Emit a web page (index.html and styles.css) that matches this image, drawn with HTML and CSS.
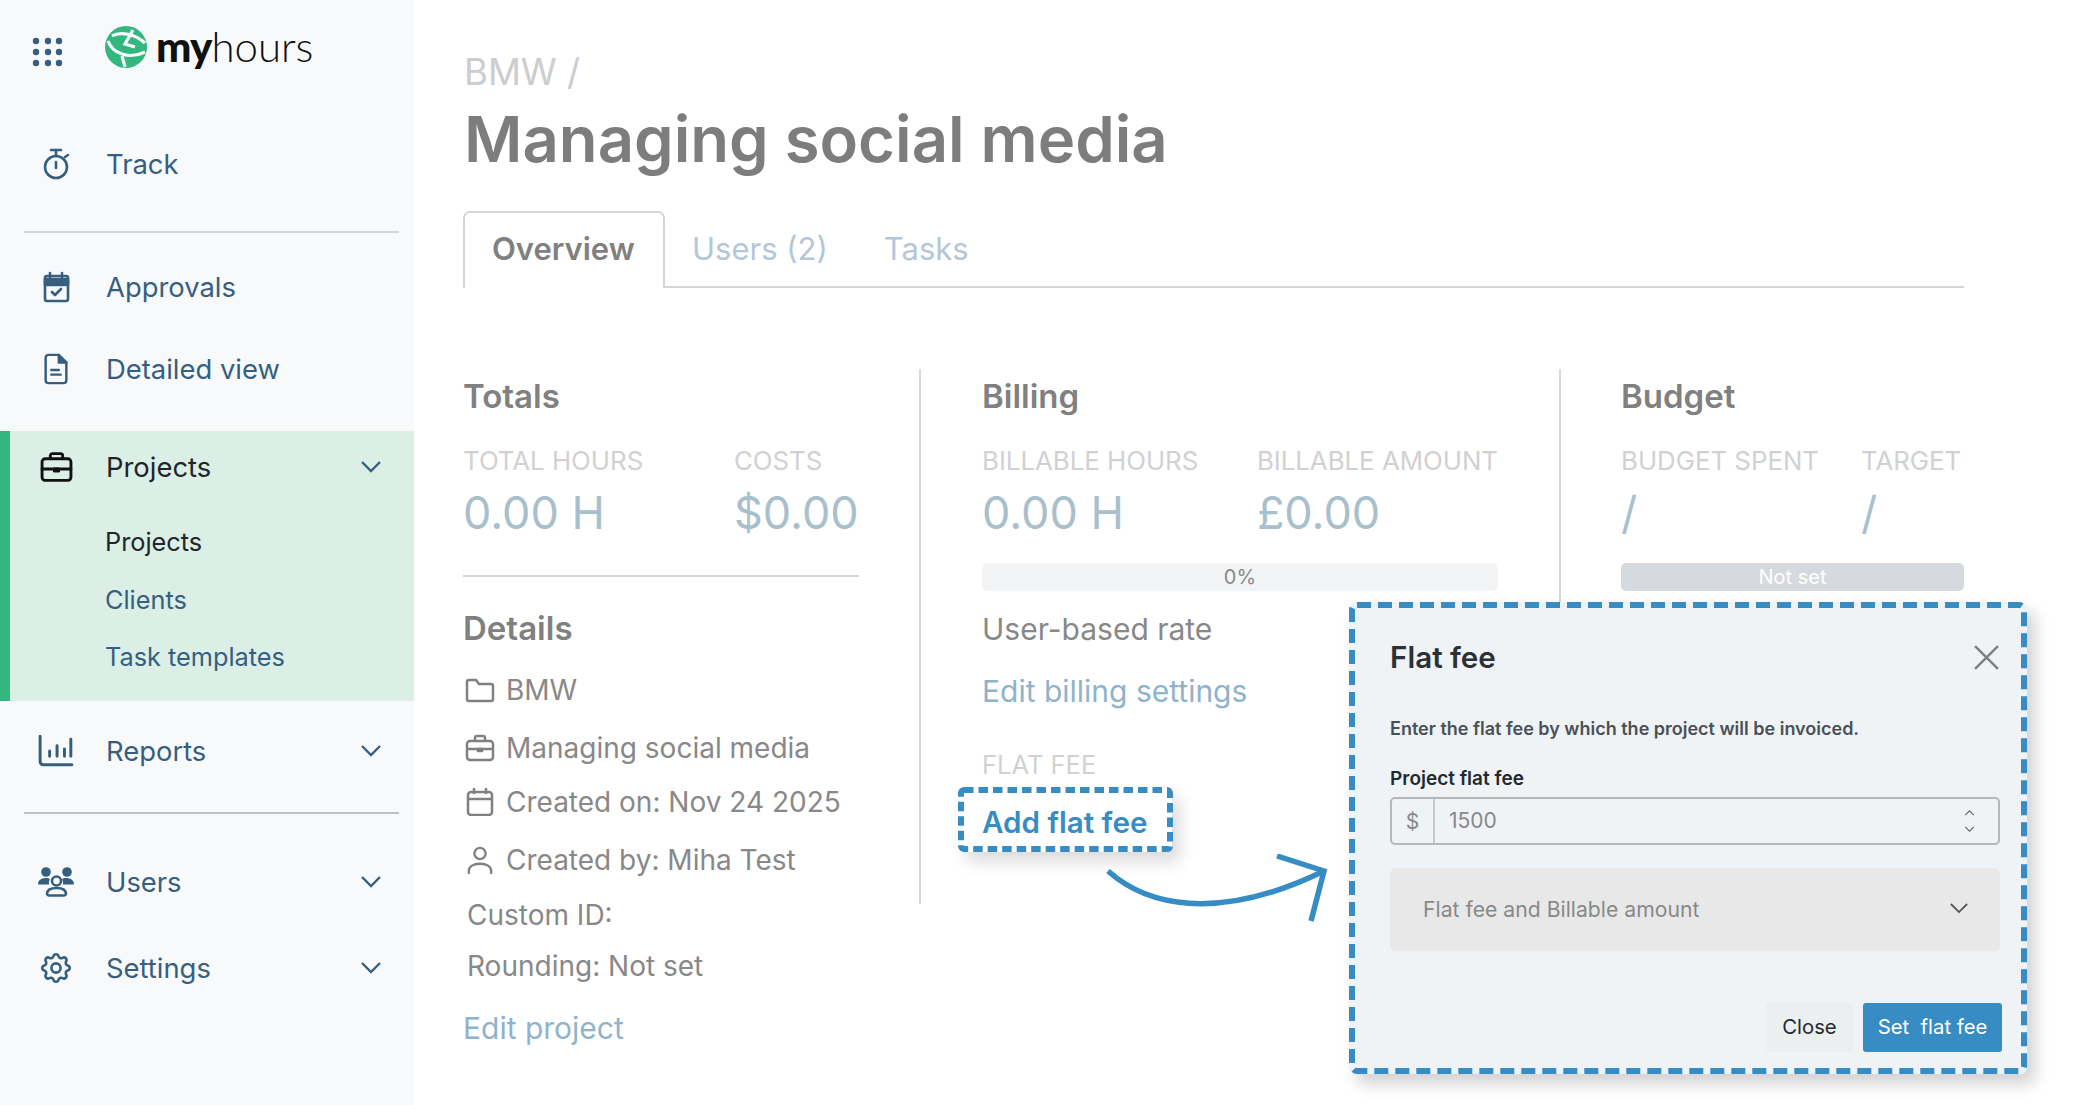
FILE: index.html
```html
<!DOCTYPE html>
<html lang="en">
<head>
<meta charset="utf-8">
<title>My Hours – Managing social media</title>
<link rel="stylesheet" href="styles.css">
</head>
<body>
<div class="app">
  <aside class="sidebar">
    <div class="brand">
      <svg class="apps" viewBox="0 0 32 30" fill="#365f7f"><circle cx="4" cy="4" r="3.2"/><circle cx="16" cy="4" r="3.2"/><circle cx="27" cy="4" r="3.2"/><circle cx="4" cy="15" r="3.2"/><circle cx="16" cy="15" r="3.2"/><circle cx="27" cy="15" r="3.2"/><circle cx="4" cy="26" r="3.2"/><circle cx="16" cy="26" r="3.2"/><circle cx="27" cy="26" r="3.2"/></svg>
      <svg class="globe" viewBox="0 0 42 42"><circle cx="21" cy="21" r="21" fill="#33b77f"/><g fill="none" stroke="#f7f9fb" stroke-width="3.200"><path d="M7 10C15 5 30 8 40 17"/><path d="M3 15C7 27 24 34 40 26"/><path d="M28 4L20 18L30 21"/><path d="M17 30L20 41"/></g></svg>
      <span class="wordmark"><b>my</b>hours</span>
    </div>
    <a class="nav nav-track"><svg class="ico" viewBox="0 0 30 32" fill="none" stroke="#365f7f" stroke-width="2.6" stroke-linecap="round"><circle cx="15" cy="19" r="11"/><path d="M15 14v6M10 2h10M15 2v6M24 9l3-2"/></svg><span>Track</span></a>
    <hr class="rule-nav rule-1">
    <a class="nav nav-appr"><svg class="ico" viewBox="0 0 30 32" fill="none" stroke="#365f7f" stroke-width="2.6" stroke-linecap="round" stroke-linejoin="round"><rect x="4" y="5" width="23" height="25" rx="2"/><path d="M4 8h23v6H4z" fill="#365f7f"/><path d="M9 2v4M21 2v4" /><path d="M11 21l3 3 6-6"/></svg><span>Approvals</span></a>
    <a class="nav nav-detail"><svg class="ico" viewBox="0 0 30 34" fill="none" stroke="#365f7f" stroke-width="2.6" stroke-linecap="round" stroke-linejoin="round"><path d="M18 2H7a3 3 0 0 0-3 3v24a3 3 0 0 0 3 3h16a3 3 0 0 0 3-3V10z"/><path d="M18 2v8h8" fill="#365f7f"/><path d="M10 18h8M10 23h10"/></svg><span>Detailed view</span></a>
    <section class="group">
      <a class="nav nav-head"><svg class="ico ico-brief" viewBox="0 0 32 30" fill="none" stroke="#111" stroke-width="2.8" stroke-linecap="round" stroke-linejoin="round"><rect x="2" y="7" width="28" height="21" rx="3"/><path d="M10 7V4a2 2 0 0 1 2-2h8a2 2 0 0 1 2 2v3M2 17h28"/><path d="M14 17h4v2h-4z" fill="#111"/></svg><span>Projects</span><svg class="chev" viewBox="0 0 20 12"><path d="M1 1l9 9 9-9"/></svg></a>
      <a class="sub sub-on">Projects</a>
      <a class="sub">Clients</a>
      <a class="sub">Task templates</a>
    </section>
    <a class="nav nav-reports"><svg class="ico ico-wide" viewBox="0 0 34 30" fill="none" stroke="#365f7f" stroke-width="2.8" stroke-linecap="round"><path d="M2 1v24a3 3 0 0 0 3 3h27"/><path d="M11 15v5M18 10v10M25 13v7M31 4v16" /></svg><span>Reports</span><svg class="chev" viewBox="0 0 20 12"><path d="M1 1l9 9 9-9"/></svg></a>
    <hr class="rule-nav rule-2">
    <a class="nav nav-users"><svg class="ico ico-wide" viewBox="0 0 36 30" fill="#365f7f"><circle cx="8" cy="5" r="4.800"/><circle cx="29" cy="5" r="4.800"/><path d="M0 17c0-4 4-6 8-6 2 0 3 .5 4 1-.5 1-1 2-1 4 0 .500 0 1 .2 1.500H1a1 1 0 0 1-1-.5zM36 17c0-4-4-6-8-6-2 0-3 .5-4 1 .5 1 1 2 1 4 0 .5 0 1-.2 1.500H35a1 1 0 0 0 1-.5z"/><circle cx="18.500" cy="14" r="4.500" fill="none" stroke="#365f7f" stroke-width="2.600"/><path d="M9 27c0-4 4-6 9.500-6S28 23 28 27a2 2 0 0 1-2 1.500H11A2 2 0 0 1 9 27z" fill="none" stroke="#365f7f" stroke-width="2.600"/></svg><span>Users</span><svg class="chev" viewBox="0 0 20 12"><path d="M1 1l9 9 9-9"/></svg></a>
    <a class="nav nav-settings"><svg class="ico" viewBox="2.200 2.200 19.600 19.600" fill="none" stroke="#365f7f" stroke-width="1.700" stroke-linecap="round" stroke-linejoin="round"><path d="M10.325 4.317c.426-1.756 2.924-1.756 3.350 0a1.724 1.724 0 0 0 2.573 1.066c1.543-.94 3.310.826 2.370 2.370a1.724 1.724 0 0 0 1.065 2.572c1.756.426 1.756 2.924 0 3.350a1.724 1.724 0 0 0-1.066 2.573c.94 1.543-.826 3.310-2.370 2.370a1.724 1.724 0 0 0-2.572 1.065c-.426 1.756-2.924 1.756-3.350 0a1.724 1.724 0 0 0-2.573-1.066c-1.543.94-3.310-.826-2.370-2.370a1.724 1.724 0 0 0-1.065-2.572c-1.756-.426-1.756-2.924 0-3.350a1.724 1.724 0 0 0 1.066-2.573c-.94-1.543.826-3.310 2.370-2.370 1 .608 2.296.07 2.572-1.065z"/><circle cx="12" cy="12" r="3"/></svg><span>Settings</span><svg class="chev" viewBox="0 0 20 12"><path d="M1 1l9 9 9-9"/></svg></a>
  </aside>

  <main class="main">
    <div class="crumb">BMW /</div>
    <h1 class="title">Managing social media</h1>
    <nav class="tabs">
      <a class="tab tab-on">Overview</a>
      <a class="tab tab-users">Users (2)</a>
      <a class="tab tab-tasks">Tasks</a>
    </nav>
    <div class="cols">
      <section class="col col-totals">
        <h2 class="h">Totals</h2>
        <div class="stats">
          <div class="stat stat-hours"><div class="lab">TOTAL HOURS</div><div class="val">0.00 H</div></div>
          <div class="stat"><div class="lab">COSTS</div><div class="val">$0.00</div></div>
        </div>
        <hr class="rule-col">
        <h2 class="h h-details">Details</h2>
        <div class="row row-1"><svg class="dico" viewBox="0 0 30 26" fill="none" stroke="#808080" stroke-width="2.500" stroke-linejoin="round"><path d="M2 5a2 2 0 0 1 2-2h7l3 4h12a2 2 0 0 1 2 2v13a2 2 0 0 1-2 2H4a2 2 0 0 1-2-2z"/></svg>BMW</div>
        <div class="row row-2"><svg class="dico" viewBox="0 0 30 28" fill="none" stroke="#808080" stroke-width="2.500" stroke-linejoin="round"><rect x="2" y="7" width="26" height="19" rx="3"/><path d="M10 7V4a2 2 0 0 1 2-2h6a2 2 0 0 1 2 2v3M2 15h26"/><path d="M13 15h4v2h-4z" fill="#808080"/></svg>Managing social media</div>
        <div class="row row-3"><svg class="dico" viewBox="0 0 30 28" fill="none" stroke="#808080" stroke-width="2.500" stroke-linejoin="round" stroke-linecap="round"><rect x="3" y="4" width="24" height="23" rx="3"/><path d="M3 11h24M9 1v4M21 1v4"/></svg>Created on: Nov 24 2025</div>
        <div class="row row-4"><svg class="dico" viewBox="0 0 30 30" fill="none" stroke="#808080" stroke-width="2.500" stroke-linecap="round"><circle cx="15" cy="8" r="6"/><path d="M3 29v-2c0-5 5-8 12-8s12 3 12 8v2"/></svg>Created by: Miha Test</div>
        <div class="row row-5 row-plain">Custom ID:</div>
        <div class="row row-6 row-plain">Rounding: Not set</div>
        <a class="link row-link">Edit project</a>
      </section>
      <section class="col col-billing">
        <h2 class="h">Billing</h2>
        <div class="stats">
          <div class="stat stat-bhours"><div class="lab">BILLABLE HOURS</div><div class="val">0.00 H</div></div>
          <div class="stat"><div class="lab">BILLABLE AMOUNT</div><div class="val">£0.00</div></div>
        </div>
        <div class="bar">0%</div>
        <div class="rate">User-based rate</div>
        <a class="link link-billing">Edit billing settings</a>
        <div class="lab lab-fee">FLAT FEE</div>
        <a class="addfee"><svg class="dash" width="215" height="65"><rect x="3" y="3" width="209" height="59" rx="3"/></svg>Add flat fee</a>
      </section>
      <section class="col col-budget">
        <h2 class="h">Budget</h2>
        <div class="stats">
          <div class="stat stat-spent"><div class="lab">BUDGET SPENT</div><div class="val">/</div></div>
          <div class="stat"><div class="lab">TARGET</div><div class="val">/</div></div>
        </div>
        <div class="bar bar-off">Not set</div>
      </section>
    </div>
  </main>

  <svg class="arrow" width="230" height="70" viewBox="0 0 230 70" fill="none" stroke="#378cc3" stroke-width="5.500"><path d="M3 17C40 50 110 70 219 17"/><path d="M172 2L219 17L206 67"/></svg>

  <div class="modal">
    <svg class="dash dash-modal" width="678" height="472"><rect x="3" y="3" width="672" height="466" rx="5"/></svg>
    <header class="m-head"><h3>Flat fee</h3><svg class="m-x" viewBox="0 0 24 24" fill="none" stroke="#808080" stroke-width="2.400"><path d="M1 1l22 22M23 1L1 23"/></svg></header>
    <p class="m-desc">Enter the flat fee by which the project will be invoiced.</p>
    <label class="m-label">Project flat fee</label>
    <div class="m-input"><span class="m-add">$</span><span class="m-val">1500</span><span class="m-spin"><svg viewBox="0 0 12 7"><path d="M1 6l5-5 5 5"/></svg><svg viewBox="0 0 12 7"><path d="M1 1l5 5 5-5"/></svg></span></div>
    <div class="m-select"><span>Flat fee and Billable amount</span><svg viewBox="0 0 20 12"><path d="M1 1l9 9 9-9"/></svg></div>
    <footer class="m-foot"><button class="btn btn-close">Close</button><button class="btn btn-set">Set&nbsp; flat fee</button></footer>
  </div>
</div>
</body>
</html>
```
FILE: styles.css
```css
* { box-sizing: border-box; }
html, body { margin: 0; height: 1105px; overflow: hidden; background: #fff; }
body { font-family: Inter, "Liberation Sans", sans-serif; font-size: 28px; color: #808080; }
.app { position: relative; display: flex; width: 2084px; height: 1105px; overflow: hidden; }
h1, h2, h3, p, hr { margin: 0; }

/* sidebar */
.sidebar { flex: 0 0 414px; height: 1105px; background: #f7f9fb; color: #365f7f; }
.brand { height: 100px; display: flex; align-items: center; padding-left: 32px; }
.apps { width: 32px; height: 30px; margin-top: 3px; }
.globe { width: 42px; height: 42px; margin-left: 41px; margin-bottom: 6px; }
.wordmark { font-family: Lato, sans-serif; font-weight: 300; font-size: 42px; color: #111; margin-left: 9px; margin-bottom: 9px; letter-spacing: -.1px; }
.wordmark b { font-weight: 900; letter-spacing: -.8px; }
.nav { display: flex; align-items: center; height: 50px; padding-left: 41px; font-size: 27.400px; color: #365f7f; }
.nav > span { flex: 1; margin-left: 35px; }
.ico { flex: 0 0 30px; width: 30px; height: 32px; }
.ico-wide { flex: 0 0 36px; width: 36px; margin-left: -3px; margin-right: -3px; }
.ico-brief { flex: 0 0 33px; width: 33px; margin-left: -1.500px; margin-right: -1.500px; }
.chev { width: 20px; height: 12px; margin-right: 33px; fill: none; stroke: #365f7f; stroke-width: 2.400; }
.nav-track { margin-top: 39px; }
.rule-nav { border: 0; height: 2px; background: #d3d6d9; margin-left: 24px; width: 375px; }
.rule-1 { margin-top: 42px; }
.nav-appr { margin-top: 29px; }
.nav-detail { margin-top: 32px; }
.group { height: 270px; margin-top: 37px; background: #dbefe7; box-shadow: inset 10px 0 0 #33b77f; padding-top: 11px; }
.nav-head { color: #1f2529; }
.sub { display: block; height: 40px; line-height: 40px; padding-left: 105px; font-size: 25.300px; color: #365f7f; margin-top: 18px; }
.sub-on { color: #1f2529; margin-top: 30px; }
.sub-on + .sub + .sub { margin-top: 17px; }
.nav-reports { margin-top: 25px; }
.rule-2 { margin-top: 36px; background: #bfc1c4; }
.nav-users { margin-top: 43px; }
.nav-settings { margin-top: 36px; }

/* main */
.main { flex: 1; padding: 52px 120px 0 49px; min-width: 0; }
.crumb { font-size: 36.500px; line-height: 40px; color: #cbcdcf; padding-left: 1px; }
.title { font-size: 63.400px; font-weight: 600; line-height: 80px; margin-top: 7px; padding-left: 1px; color: #7d7d7d; white-space: nowrap; }
.tabs { display: flex; height: 77px; margin-top: 32px; border-bottom: 2px solid #d3d6d9; }
.tab { display: flex; align-items: center; height: 75px; padding: 0 28px; font-size: 31px; color: #b4c6d7; white-space: nowrap; }
.tab-on { width: 202px; height: 77px; padding: 0 27px 4px; font-weight: 600; color: #808080; border: 2px solid #d3d6d9; border-bottom: 0; border-radius: 7px 7px 0 0; background: #fff; position: relative; }
.tab-users { padding-left: 27px; }
.tab-tasks { padding-left: 28px; }

.cols { display: grid; grid-template-columns: 456px 640px 1fr; margin-top: 81px; }
.col { height: 535px; }
.col-billing { border-left: 2px solid #d8d8d8; padding-left: 61px; padding-right: 61px; }
.col-budget { border-left: 2px solid #d8d8d8; padding-left: 60px; }
.h { font-size: 33px; font-weight: 600; line-height: 40px; padding-top: 0; margin-top: 7px; color: #808080; }
.stats { display: flex; margin-top: 27px; }
.stat-hours { width: 271px; }
.stat-bhours { width: 276px; }
.stat-spent { width: 240px; }
.lab { font-size: 25.800px; line-height: 36px; color: #d1d1d1; white-space: nowrap; }
.val { font-size: 45px; line-height: 56px; margin-top: 6px; color: #a8bfcc; white-space: nowrap; }
.rule-col { border: 0; height: 2px; width: 396px; background: #d3d6d9; margin-top: 34px; }
.h-details { margin-top: 31px; }
.row { display: flex; align-items: center; height: 40px; font-size: 28px; color: #888; white-space: nowrap; }
.dico { width: 30px; height: 28px; margin: 0 11px 0 2px; flex: none; }
.row-plain { padding-left: 4px; }
.row-1 { margin-top: 22px; }
.row-2 { margin-top: 18px; }
.row-3 { margin-top: 14px; }
.row-4 { margin-top: 18px; }
.row-5 { margin-top: 15px; }
.row-6 { margin-top: 11px; }
.link { display: block; height: 40px; line-height: 40px; font-size: 30px; color: #8fb3cc; white-space: nowrap; }
.row-link { margin-top: 22px; }

.bar { height: 28px; line-height: 28px; margin-top: 22px; border-radius: 5px; background: #f3f4f6; text-align: center; font-size: 20px; color: #888; }
.bar-off { background: #d6d9dd; color: #fff; }
.rate { height: 40px; line-height: 40px; margin-top: 18px; color: #888; font-size: 30px; }
.link-billing { margin-top: 22px; }
.lab-fee { margin-top: 36px; font-size: 25.500px; }
.addfee { position: relative; display: flex; align-items: center; width: 214px; height: 65px; margin: 4px 0 0 -24px; padding: 4px 0 0 24px; font-size: 29.600px; font-weight: 600; color: #378cc3; border-radius: 4px; box-shadow: 8px 10px 16px rgba(0,0,0,.14); white-space: nowrap; }
.dash { position: absolute; left: 0; top: 0; fill: none; stroke: #378cc3; stroke-width: 6; stroke-dasharray: 9.500 5; }
.dash-modal { stroke-dasharray: 14 7; }

/* overlay arrow */
.arrow { position: absolute; left: 1105px; top: 854px; }

/* modal */
.modal { position: absolute; left: 1349px; top: 602px; width: 678px; height: 472px; padding: 34px 27px 0 41px; background: #eff3f6; border-radius: 6px; box-shadow: 8px 10px 16px rgba(0,0,0,.18); display: flex; flex-direction: column; }
.m-head { display: flex; justify-content: space-between; align-items: center; height: 42px; }
.m-head h3 { font-size: 29.600px; font-weight: 600; color: #2b3137; }
.m-x { width: 25px; height: 25px; margin-right: 1px; }
.m-desc { margin-top: 36px; height: 30px; line-height: 30px; font-size: 18px; font-weight: 600; color: #4a5058; white-space: nowrap; }
.m-label { display: block; margin-top: 20px; height: 30px; line-height: 30px; font-size: 19px; font-weight: 600; color: #23292f; }
.m-input { display: flex; align-items: center; height: 48px; margin-top: 3px; border: 2px solid #b4b8bc; border-radius: 5px; font-size: 21px; color: #888; }
.m-add { flex: 0 0 43px; height: 100%; display: flex; align-items: center; justify-content: center; border-right: 2px solid #c6cacd; }
.m-val { flex: 1; padding-left: 14px; padding-bottom: 1px; }
.m-spin { display: flex; flex-direction: column; gap: 10px; margin-right: 23px; }
.m-spin svg { display: block; width: 11px; height: 6px; fill: none; stroke: #666; stroke-width: 1.300; }
.m-select { display: flex; align-items: center; justify-content: space-between; height: 83px; margin-top: 23px; padding: 0 32px 2px 33px; background: #e8e8e8; border-radius: 6px; font-size: 21.200px; color: #888; }
.m-select svg { width: 18px; height: 11px; fill: none; stroke: #555; stroke-width: 2; }
.m-foot { display: flex; justify-content: flex-end; gap: 10px; margin-top: 52px; margin-right: -2px; }
.btn { height: 49px; border: 0; font-family: inherit; font-size: 20.300px; border-radius: 3px; padding: 0 0 2px; }
.btn-close { width: 87px; background: #ecefef; color: #23292f; }
.btn-set { width: 139px; background: #378cc3; color: #fff; }
```
